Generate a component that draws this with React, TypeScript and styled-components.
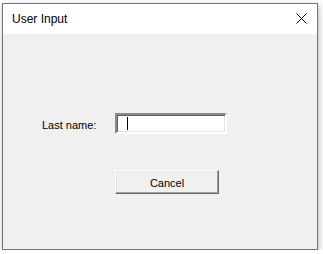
import styled, { createGlobalStyle } from "styled-components";

const GlobalStyle = createGlobalStyle`
  html, body {
    margin: 0;
    padding: 0;
    background: #ffffff;
  }
  body {
    font-family: "Liberation Sans", Arial, sans-serif;
  }
`;

export default function App() {
  return (
    <>
      <GlobalStyle />
      <DialogWindow>
        <TitleBar>
          <Title>User Input</Title>
          <CloseButton aria-label="Close">
            <svg width="11" height="11" viewBox="0 0 11 11">
              <path d="M0.5 0.5 L10.5 10.5 M10.5 0.5 L0.5 10.5" stroke="#000" strokeWidth="1" />
            </svg>
          </CloseButton>
        </TitleBar>

        <ClientArea>
          <FormGrid>
            <Label>Last name:</Label>
            <TextBox>
              <Caret />
            </TextBox>
            <span />
            <Button>Cancel</Button>
          </FormGrid>
        </ClientArea>
      </DialogWindow>
    </>
  );
}

const DialogWindow = styled.div`
  box-sizing: border-box;
  width: 316px;
  height: 247px;
  margin: 3px 0 0 2px;
  border: 1px solid #737373;
  background: #f0f0f0;
  display: flex;
  flex-direction: column;
  box-shadow: 1px 2px 6px rgba(0, 0, 0, 0.28);
`;

const TitleBar = styled.div`
  height: 30px;
  background: #ffffff;
  display: flex;
  align-items: center;
  justify-content: space-between;
  padding: 0 10px 0 9px;
`;

const Title = styled.span`
  font-size: 12px;
  color: #000000;
  margin-top: -1px;
`;

const CloseButton = styled.div`
  display: flex;
  width: 11px;
  height: 11px;
  margin-top: -1px;
`;

const ClientArea = styled.div`
  flex: 1;
  padding: 79px 0 0 39px;
`;

const FormGrid = styled.div`
  display: grid;
  grid-template-columns: 73px auto;
  row-gap: 36px;
  align-items: center;
  justify-content: start;
`;

const Label = styled.span`
  font-size: 11px;
  color: #000000;
  padding-top: 3px;
`;

const TextBox = styled.div`
  box-sizing: border-box;
  width: 112px;
  height: 21px;
  background: #ffffff;
  border-style: solid;
  border-width: 2px;
  border-color: #8a8a8a #ffffff #ffffff #8a8a8a;
  box-shadow: inset 1px 1px 0 #5f5f5f, inset -1px -1px 0 #e3e3e3;
  display: flex;
  align-items: center;
  padding-left: 10px;
`;

const Caret = styled.div`
  width: 1px;
  height: 13px;
  background: #000000;
`;

const Button = styled.div`
  box-sizing: border-box;
  width: 104px;
  height: 24px;
  background: #f0f0f0;
  border-style: solid;
  border-width: 1px;
  border-color: #ffffff #696969 #696969 #ffffff;
  box-shadow: inset -1px -1px 0 #a0a0a0, inset 1px 1px 0 #e3e3e3;
  display: flex;
  align-items: center;
  justify-content: center;
  font-size: 11px;
  color: #000000;
  padding-top: 1px;
`;
